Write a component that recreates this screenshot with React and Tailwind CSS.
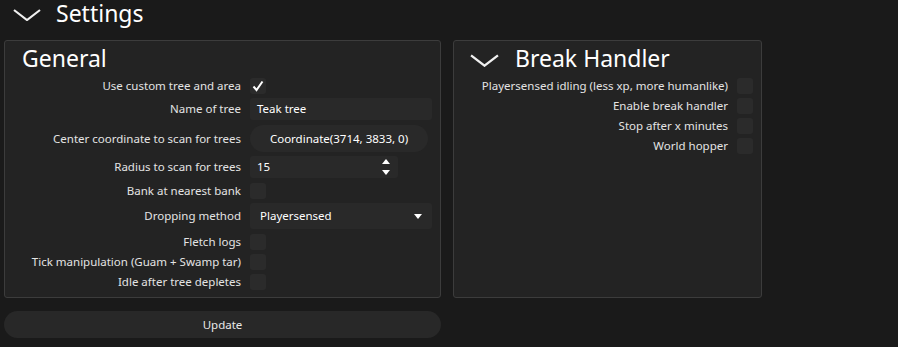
import { useState } from 'react';

const font = { fontFamily: '"Noto Sans", "Open Sans", sans-serif' };

function Chevron({ className }) {
    return (
        <svg className={className} viewBox="0 0 28 12" fill="none">
            <path d="M1 1 L14 11 L27 1" stroke="#f0f0f0" strokeWidth="2.2" strokeLinejoin="miter" />
        </svg>
    );
}

function Checkbox({ checked }) {
    return (
        <div className="w-4 h-4 rounded-[3px] bg-[#2b2b2b] flex items-center justify-center">
            {checked && (
                <svg width="14" height="14" viewBox="0 0 14 14" fill="none">
                    <path d="M2.5 7.5 L5.5 11 L11.5 2.5" stroke="#ffffff" strokeWidth="2" />
                </svg>
            )}
        </div>
    );
}

function Row({ label, className = '', labelWidth = 'w-[236px]', children }) {
    return (
        <div className={`flex items-center gap-[9px] ${className}`}>
            <div className={`${labelWidth} text-right text-[11.5px] text-[#e4e4e4] whitespace-nowrap`}>{label}</div>
            {children}
        </div>
    );
}

export default function App() {
    const [useCustom] = useState(true);

    return (
        <div className="w-[898px] h-[347px] bg-[#1a1a1a] text-white overflow-hidden" style={font}>
            {/* Header */}
            <div className="flex items-start h-[40px] pl-[13px] pt-[1px]">
                <Chevron className="w-[28px] h-[12px] mt-[8px]" />
                <span className="ml-[15px] text-[23px] leading-[24px]">Settings</span>
            </div>

            <div className="flex gap-[12px] pl-[4px]">
                {/* General */}
                <div className="w-[437px]">
                    <div className="h-[258px] bg-[#232323] border border-[#3c3c3c] rounded-[3px]">
                        <div className="h-[37px] pl-[17px] pt-[2px]">
                            <span className="text-[23px] leading-[30px]">General</span>
                        </div>
                        <Row label="Use custom tree and area" className="h-4">
                            <Checkbox checked={useCustom} />
                        </Row>
                        <Row label="Name of tree" className="h-[22px] mt-[4px]">
                            <div className="w-[182px] h-[22px] bg-[#292929] rounded-[3px] pl-[7px] text-[11.5px] flex items-center">Teak tree</div>
                        </Row>
                        <Row label="Center coordinate to scan for trees" className="h-[27px] mt-[5px]">
                            <div className="w-[178px] h-[27px] bg-[#292929] rounded-full text-[11.5px] flex items-center justify-center">Coordinate(3714, 3833, 0)</div>
                        </Row>
                        <Row label="Radius to scan for trees" className="h-[22px] mt-[4px]">
                            <div className="w-[148px] h-[22px] bg-[#292929] rounded-[3px] pl-[7px] pr-[8px] text-[11.5px] flex items-center justify-between">
                                <span>15</span>
                                <div className="flex flex-col gap-[6px]">
                                    <svg width="8" height="5" viewBox="0 0 8 5"><path d="M4 0 L8 5 L0 5 Z" fill="#ffffff" /></svg>
                                    <svg width="8" height="5" viewBox="0 0 8 5"><path d="M0 0 L8 0 L4 5 Z" fill="#ffffff" /></svg>
                                </div>
                            </div>
                        </Row>
                        <Row label="Bank at nearest bank" className="h-4 mt-[5px]">
                            <Checkbox />
                        </Row>
                        <Row label="Dropping method" className="h-[26px] mt-[4px]">
                            <div className="w-[182px] h-[26px] bg-[#292929] rounded-[3px] pl-[10px] pr-[10px] text-[11.5px] flex items-center justify-between">
                                <span>Playersensed</span>
                                <svg width="8" height="5" viewBox="0 0 8 5"><path d="M0 0 L8 0 L4 5 Z" fill="#ffffff" /></svg>
                            </div>
                        </Row>
                        <Row label="Fletch logs" className="h-4 mt-[5px]">
                            <Checkbox />
                        </Row>
                        <Row label="Tick manipulation (Guam + Swamp tar)" className="h-4 mt-[4px]">
                            <Checkbox />
                        </Row>
                        <Row label="Idle after tree depletes" className="h-4 mt-[4px]">
                            <Checkbox />
                        </Row>
                    </div>
                    <button className="mt-[13px] w-full h-[27px] rounded-full bg-[#282828] text-[11.5px] text-[#e8e8e8]">Update</button>
                </div>

                {/* Break Handler */}
                <div className="w-[309px] h-[258px] bg-[#232323] border border-[#3c3c3c] rounded-[3px]">
                    <div className="h-[37px] flex items-start pt-[2px] pl-[16px]">
                        <Chevron className="w-[29px] h-[13px] mt-[11px]" />
                        <span className="ml-[16px] text-[23px] leading-[30px]">Break Handler</span>
                    </div>
                    <div className="flex flex-col gap-[4px]">
                        <Row label="Playersensed idling (less xp, more humanlike)" labelWidth="w-[274px]" className="h-4">
                            <Checkbox />
                        </Row>
                        <Row label="Enable break handler" labelWidth="w-[274px]" className="h-4">
                            <Checkbox />
                        </Row>
                        <Row label="Stop after x minutes" labelWidth="w-[274px]" className="h-4">
                            <Checkbox />
                        </Row>
                        <Row label="World hopper" labelWidth="w-[274px]" className="h-4">
                            <Checkbox />
                        </Row>
                    </div>
                </div>
            </div>
        </div>
    );
}
